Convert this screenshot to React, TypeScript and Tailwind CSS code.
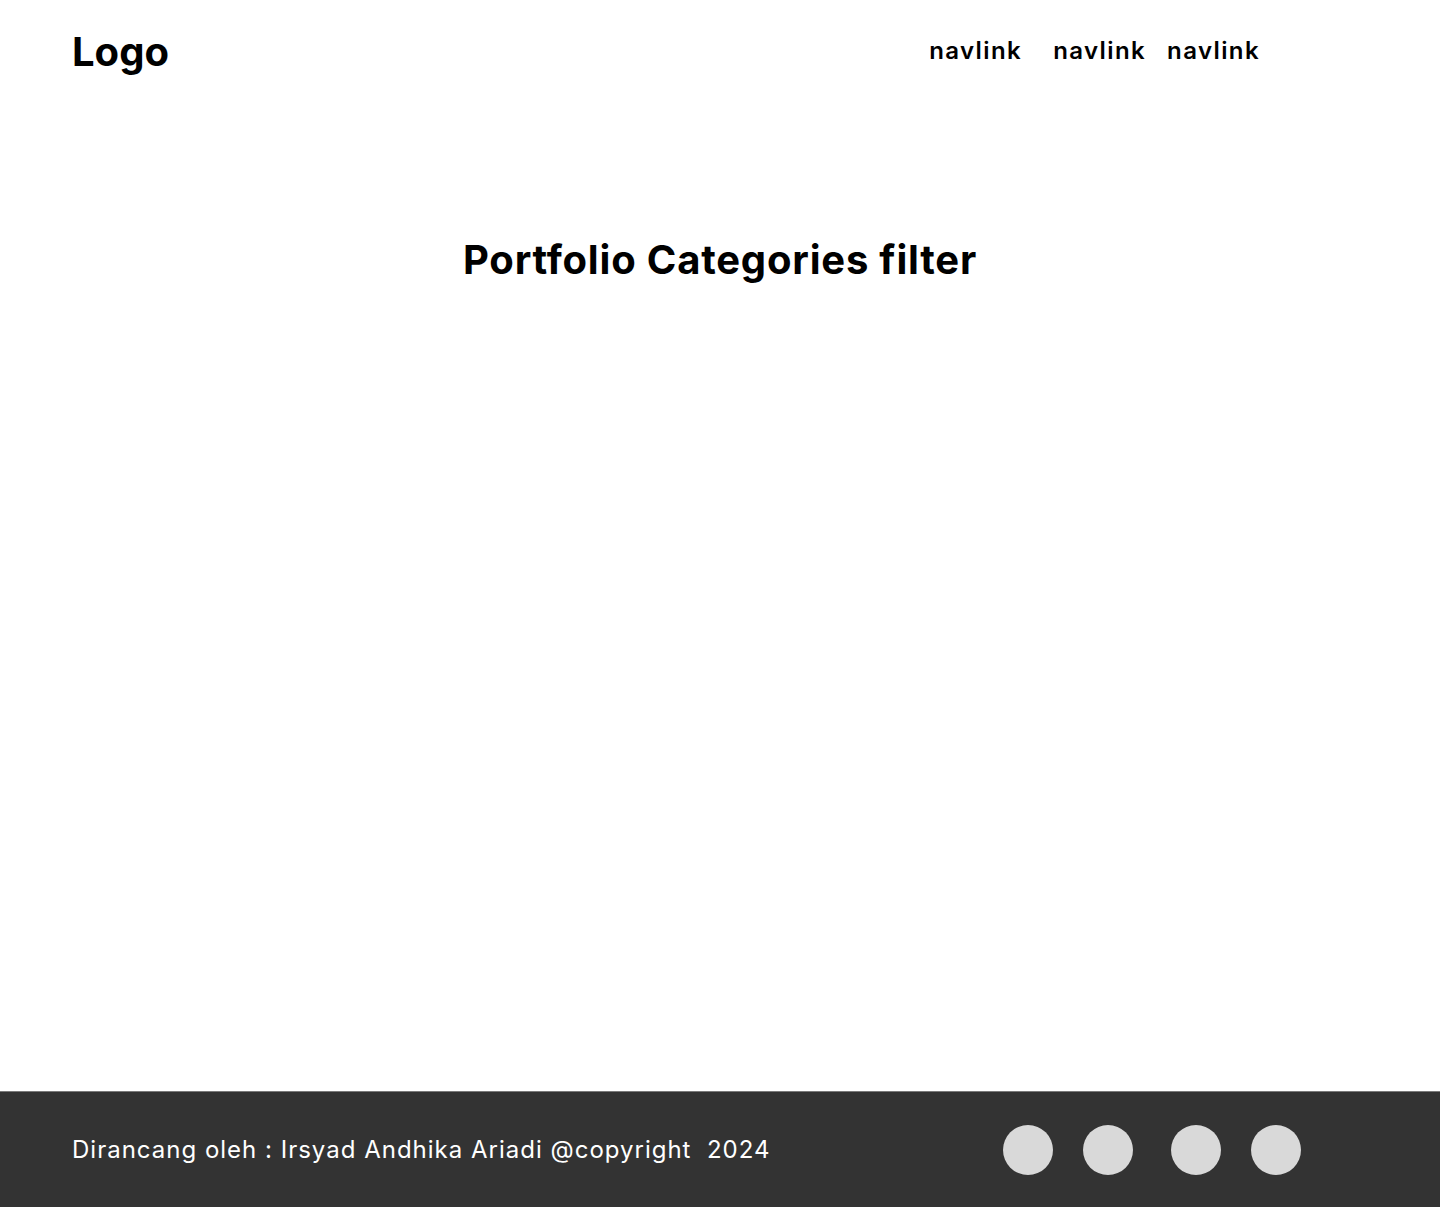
const navLinks = [
  { label: "navlink", gap: "mr-[31px]" },
  { label: "navlink", gap: "mr-[21px]" },
  { label: "navlink", gap: "" },
];

const socials = ["ml-0", "ml-[30px]", "ml-[38px]", "ml-[30px]"];

const App: React.FC = () => {
  return (
    <div className="min-h-screen flex flex-col bg-white font-['Inter',sans-serif] text-black">
      {/* Header */}
      <header className="flex items-start justify-between px-[72px] pt-[26px]">
        <a href="#" className="text-[40px] leading-[52px] font-bold">
          Logo
        </a>
        <nav className="flex items-center pr-[108px] pt-[9px]">
          {navLinks.map((link, i) => (
            <a key={i} href="#" className={`text-[24px] leading-[32px] font-semibold tracking-[1.4px] ${link.gap}`}>
              {link.label}
            </a>
          ))}
        </nav>
      </header>

      {/* Main */}
      <main className="flex-1 pt-[154px]">
        <h1 className="text-center text-[40px] leading-[56px] font-bold tracking-[0.8px]">Portfolio Categories filter</h1>
      </main>

      {/* Footer */}
      <footer className="h-[116px] bg-[#333333] border-t border-[#7a7a7a] flex items-center justify-between px-[72px]">
        <p className="text-white text-[24px] leading-[32px] tracking-[1px]">Dirancang oleh : Irsyad Andhika Ariadi @copyright&nbsp; 2024</p>
        <div className="flex items-center pr-[67px]">
          {socials.map((ml, i) => (
            <a key={i} href="#" className={`w-[50px] h-[50px] rounded-full bg-[#d9d9d9] ${ml}`}></a>
          ))}
        </div>
      </footer>
    </div>
  );
};

export default App;
